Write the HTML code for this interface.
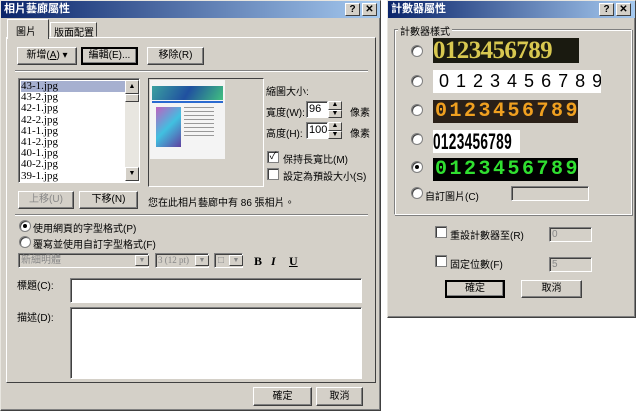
<!DOCTYPE html>
<html><head><meta charset="utf-8"><style>
*{box-sizing:border-box;margin:0;padding:0}
body{width:640px;height:413px;background:#fff;position:relative;overflow:hidden;font-family:"Liberation Sans","Noto Sans CJK TC",sans-serif;font-size:10px;color:#000}
.a{position:absolute;white-space:nowrap}
.dlg{background:#d4d0c8;border:1px solid;border-color:#e8e6e0 #404040 #404040 #e8e6e0;box-shadow:inset -1px -1px #808080}
.tb{background:linear-gradient(90deg,#0a246a,#a6caf0);color:#fff;font-weight:bold;font-size:11px;height:17px;line-height:17px;padding-left:3px}
.tbb{position:absolute;top:2px;width:15px;height:13px;background:#d4d0c8;border:1px solid;border-color:#fff #404040 #404040 #fff;color:#000;font-size:10px;line-height:11px;text-align:center;font-weight:bold}
.btn{position:absolute;background:#d4d0c8;border:1px solid;border-color:#fff #404040 #404040 #fff;box-shadow:inset -1px -1px #808080;text-align:center;font-size:10px;white-space:nowrap}
.sunk{position:absolute;background:#fff;border:1px solid;border-color:#808080 #fff #fff #808080;box-shadow:inset 1px 1px #404040;white-space:nowrap}
.dis{background:#d4d0c8}
.rad{position:absolute;width:12px;height:12px;border-radius:50%;background:#fff;border:1px solid #808080;box-shadow:inset 1px 1px #404040}
.chk{position:absolute;width:12px;height:12px;background:#fff;border:1px solid #808080;box-shadow:inset 1px 1px #404040}
.sep{position:absolute;height:2px;border-top:1px solid #808080;border-bottom:1px solid #fff}
.dig{position:absolute;overflow:hidden;white-space:nowrap;font-weight:bold}
.sc{position:absolute;width:14px;background:#d4d0c8;border:1px solid;border-color:#fff #404040 #404040 #fff;font-size:7px;text-align:center}
</style></head><body>

<div class="a dlg" style="left:0;top:0;width:381px;height:411px">
<div class="tb">相片藝廊屬性</div>
<div class="tbb" style="left:344px">?</div><div class="tbb" style="left:361px">✕</div>
</div>
<div class="a" style="left:6px;top:37px;width:370px;height:346px;border:1px solid;border-color:#fff #404040 #404040 #fff"></div>
<div class="a" style="left:7px;top:19px;width:42px;height:20px;background:#d4d0c8;border:1px solid;border-color:#fff #404040 transparent #fff;border-bottom:none;padding:3px 0 0 8px">圖片</div>
<div class="a" style="left:50px;top:22px;width:47px;height:15px;border:1px solid;border-color:#fff #404040 transparent #fff;padding:1px 0 0 3px">版面配置</div>

<div class="btn" style="left:17px;top:47px;width:60px;height:18px;line-height:16px">新增(<u>A</u>) ▾</div>
<div class="btn" style="left:81px;top:47px;width:57px;height:18px;line-height:14px;border:2px solid #000">編輯(E)...</div>
<div class="btn" style="left:147px;top:47px;width:57px;height:18px;line-height:16px">移除(R)</div>
<div class="sep" style="left:15px;top:70px;width:353px"></div>

<div class="sunk" style="left:18px;top:78px;width:122px;height:105px;overflow:hidden;font-family:'Liberation Serif',serif;font-size:11px;line-height:11.2px;padding:2px 0 0 2px">
<div style="background:#a6b0d0;width:104px">43-1.jpg</div><div>43-2.jpg</div><div>42-1.jpg</div><div>42-2.jpg</div><div>41-1.jpg</div><div>41-2.jpg</div><div>40-1.jpg</div><div>40-2.jpg</div><div>39-1.jpg</div><div>39-2.jpg</div>
</div>
<div class="a" style="left:125px;top:80px;width:14px;height:101px;background:#e8e6e0"></div>
<div class="sc" style="left:125px;top:80px;height:14px;line-height:12px">▲</div>
<div class="sc" style="left:125px;top:94px;height:8px"></div>
<div class="sc" style="left:125px;top:167px;height:14px;line-height:12px">▼</div>

<div class="a" style="left:148px;top:78px;width:116px;height:109px;border:1px solid;border-color:#404040 #fff #fff #404040"></div>
<div class="a" style="left:150px;top:80px;width:75px;height:79px;background:#f4f4f4">
<div class="a" style="left:2px;top:6px;width:71px;height:14px;background:linear-gradient(120deg,#3aa0a0,#2050a0,#40c080)"></div>
<div class="a" style="left:2px;top:21px;width:71px;height:2px;background:#2a6ad0"></div>
<div class="a" style="left:6px;top:27px;width:25px;height:40px;background:linear-gradient(135deg,#c060c0,#40c0e0,#6040a0)"></div>
<div class="a" style="left:34px;top:27px;width:30px;height:30px;background:repeating-linear-gradient(#999 0 1px,#f4f4f4 1px 4px)"></div>
</div>

<div class="a" style="left:266px;top:83px">縮圖大小:</div>
<div class="a" style="left:266px;top:104px">寬度(W):</div>
<div class="sunk" style="left:306px;top:101px;width:22px;height:17px;padding-left:2px;line-height:14px;font-size:11px">96</div>
<div class="sc" style="left:328px;top:101px;height:9px;line-height:6px">▲</div><div class="sc" style="left:328px;top:110px;height:8px;line-height:6px">▼</div>
<div class="a" style="left:350px;top:104px">像素</div>
<div class="a" style="left:266px;top:125px">高度(H):</div>
<div class="sunk" style="left:306px;top:122px;width:22px;height:17px;padding-left:2px;line-height:14px;font-size:11px">100</div>
<div class="sc" style="left:328px;top:122px;height:9px;line-height:6px">▲</div><div class="sc" style="left:328px;top:131px;height:8px;line-height:6px">▼</div>
<div class="a" style="left:350px;top:125px">像素</div>
<div class="chk" style="left:267px;top:151px;font-size:10px;line-height:9px;text-align:center">✓</div>
<div class="a" style="left:283px;top:151px">保持長寬比(M)</div>
<div class="chk" style="left:267px;top:168px"></div>
<div class="a" style="left:283px;top:168px">設定為預設大小(S)</div>

<div class="btn" style="left:18px;top:191px;width:56px;height:18px;line-height:16px;color:#888">上移(U)</div>
<div class="btn" style="left:79px;top:191px;width:59px;height:18px;line-height:16px">下移(N)</div>
<div class="a" style="left:148px;top:194px">您在此相片藝廊中有 86 張相片。</div>
<div class="sep" style="left:15px;top:214px;width:353px"></div>

<div class="rad" style="left:19px;top:220px"><div class="a" style="left:3px;top:3px;width:4px;height:4px;background:#000;border-radius:50%"></div></div>
<div class="a" style="left:33px;top:220px">使用網頁的字型格式(P)</div>
<div class="rad" style="left:19px;top:236px"></div>
<div class="a" style="left:33px;top:236px">覆寫並使用自訂字型格式(F)</div>

<div class="sunk dis" style="left:18px;top:253px;width:131px;height:15px;color:#888;line-height:13px;padding-left:2px">新細明體</div>
<div class="sc" style="left:135px;top:255px;height:11px;color:#888;line-height:9px">▼</div>
<div class="sunk dis" style="left:155px;top:253px;width:54px;height:15px;color:#888;line-height:13px;padding-left:2px;font-size:9px;font-family:'Liberation Serif',serif">3 (12 pt)</div>
<div class="sc" style="left:195px;top:255px;height:11px;color:#888;line-height:9px">▼</div>
<div class="sunk dis" style="left:214px;top:253px;width:29px;height:15px;color:#888;line-height:13px;padding-left:3px">□</div>
<div class="sc" style="left:229px;top:255px;height:11px;color:#888;line-height:9px">▼</div>
<div class="a" style="left:254px;top:254px;font-family:'Liberation Serif',serif;font-weight:bold;font-size:12px">B</div>
<div class="a" style="left:271px;top:254px;font-family:'Liberation Serif',serif;font-weight:bold;font-style:italic;font-size:12px">I</div>
<div class="a" style="left:289px;top:254px;font-family:'Liberation Serif',serif;font-weight:bold;text-decoration:underline;font-size:12px">U</div>

<div class="a" style="left:17px;top:277px">標題(C):</div>
<div class="sunk" style="left:70px;top:278px;width:292px;height:25px"></div>
<div class="a" style="left:17px;top:309px">描述(D):</div>
<div class="sunk" style="left:70px;top:307px;width:292px;height:72px"></div>

<div class="btn" style="left:253px;top:387px;width:59px;height:19px;line-height:17px">確定</div>
<div class="btn" style="left:316px;top:387px;width:47px;height:19px;line-height:17px">取消</div>

<div class="a dlg" style="left:387px;top:0;width:249px;height:318px">
<div class="tb">計數器屬性</div>
<div class="tbb" style="left:211px">?</div><div class="tbb" style="left:228px">✕</div>
</div>
<div class="a" style="left:394px;top:29px;width:238px;height:186px;border:1px solid;border-color:#808080 #fff #fff #808080;box-shadow:inset 1px 1px #fff,1px 1px #808080"></div>
<div class="a" style="left:398px;top:23px;background:#d4d0c8;padding:0 2px">計數器樣式</div>

<div class="rad" style="left:411px;top:45px"></div>
<div class="dig" style="left:433px;top:38px;width:146px;height:25px;background:#1a1a10;color:#d8c850;font-family:'Liberation Serif',serif;font-size:25px;line-height:25px;letter-spacing:-0.6px">0123456789</div>
<div class="rad" style="left:411px;top:75px"></div>
<div class="dig" style="left:433px;top:70px;width:168px;height:23px;background:#fff;font-weight:normal;font-size:18px;line-height:23px;letter-spacing:7px;padding-left:6px">0123456789</div>
<div class="rad" style="left:411px;top:104px"></div>
<div class="dig" style="left:433px;top:100px;width:145px;height:23px;background:#2a2018;color:#f0a020;font-family:'Liberation Mono',monospace;font-size:20px;line-height:23px;letter-spacing:2.5px;padding-left:2px">0123456789</div>
<div class="rad" style="left:411px;top:133px"></div>
<div class="a" style="left:433px;top:130px;width:87px;height:23px;background:#fff;overflow:hidden"><div style="font-weight:bold;font-size:22px;line-height:23px;transform:scaleX(0.62);transform-origin:left;letter-spacing:0.5px">0123456789</div></div>
<div class="rad" style="left:411px;top:161px"><div class="a" style="left:3px;top:3px;width:4px;height:4px;background:#000;border-radius:50%"></div></div>
<div class="dig" style="left:433px;top:158px;width:145px;height:23px;background:#000;color:#30e030;font-family:'Liberation Mono',monospace;font-size:20px;line-height:23px;letter-spacing:2.5px;padding-left:2px">0123456789</div>
<div class="rad" style="left:411px;top:187px"></div>
<div class="a" style="left:425px;top:188px">自訂圖片(C)</div>
<div class="sunk dis" style="left:511px;top:186px;width:78px;height:15px"></div>

<div class="chk" style="left:435px;top:226px"></div>
<div class="a" style="left:450px;top:227px">重設計數器至(R)</div>
<div class="sunk dis" style="left:549px;top:227px;width:43px;height:15px;color:#888;padding-left:2px;line-height:13px">0</div>
<div class="chk" style="left:435px;top:255px"></div>
<div class="a" style="left:450px;top:256px">固定位數(F)</div>
<div class="sunk dis" style="left:549px;top:257px;width:43px;height:15px;color:#888;padding-left:2px;line-height:13px">5</div>

<div class="btn" style="left:445px;top:280px;width:60px;height:18px;line-height:14px;border:2px solid #000">確定</div>
<div class="btn" style="left:521px;top:280px;width:61px;height:18px;line-height:16px">取消</div>
</body></html>
